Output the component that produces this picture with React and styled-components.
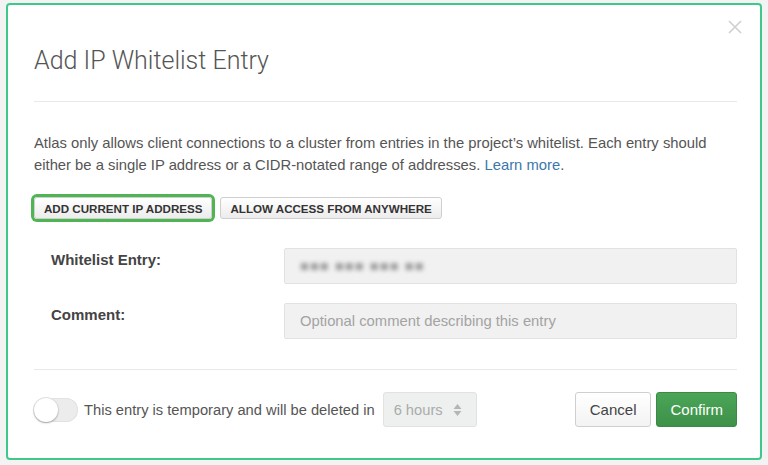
import React from "react";
import styled, { createGlobalStyle } from "styled-components";

const GlobalStyle = createGlobalStyle`
  html, body {
    margin: 0;
    padding: 0;
    background: #f3f3f3;
  }
  body {
    font-family: "Liberation Sans", Arial, sans-serif;
    color: #555;
  }
`;

const Page = styled.div`
  width: 768px;
  height: 465px;
  padding: 3px 0 0 6px;
  box-sizing: border-box;
`;

const Modal = styled.div`
  position: relative;
  width: 756px;
  height: 457px;
  box-sizing: border-box;
  background: #fff;
  border: 2px solid #3ec98b;
  border-radius: 4px;
  padding: 0 23px 0 26px;
  display: flex;
  flex-direction: column;
`;

const Header = styled.div`
  padding: 40px 0 24px;
  border-bottom: 1px solid #e8e8e8;
`;

const Title = styled.h2`
  margin: 0;
  font-family: Roboto, "Liberation Sans", sans-serif;
  font-weight: 300;
  font-size: 25px;
  line-height: 32px;
  color: #555;
`;

const Close = styled.button`
  position: absolute;
  top: 13px;
  right: 16px;
  width: 18px;
  height: 18px;
  padding: 0;
  border: 0;
  background: none;
  display: flex;
  align-items: center;
  justify-content: center;
`;

const Intro = styled.p`
  margin: 30px 0 0;
  font-size: 14.8px;
  line-height: 22px;
  color: #555;

  & a {
    color: #3b77ad;
    text-decoration: none;
  }
`;

const ButtonRow = styled.div`
  display: flex;
  gap: 8px;
  margin-top: 21px;
`;

const SmallButton = styled.button`
  height: 22px;
  padding: 0 9px;
  font-family: "Liberation Sans", Arial, sans-serif;
  font-weight: 700;
  font-size: 11.6px;
  color: #333;
  background: linear-gradient(#ffffff, #ececec);
  border: 1px solid #cfcfcf;
  border-radius: 3px;
  box-shadow: ${(p) => (p.$focused ? "0 0 0 3px #4fb452" : "none")};
`;

const Form = styled.div`
  display: flex;
  flex-direction: column;
  gap: 19px;
  margin-top: 29px;
  padding-bottom: 30px;
  border-bottom: 1px solid #e8e8e8;
`;

const Row = styled.div`
  display: flex;
  align-items: flex-start;
`;

const Label = styled.label`
  width: 233px;
  padding: 1px 0 0 17px;
  font-weight: 700;
  font-size: 15px;
  line-height: 22px;
  color: #444;
`;

const Field = styled.div`
  flex: 1;
  height: 36px;
  box-sizing: border-box;
  background: #f1f1f1;
  border: 1px solid #e2e2e2;
  border-radius: 2px;
  padding: 0 15px;
  display: flex;
  align-items: center;
  font-size: 14.8px;
  color: ${(p) => (p.$placeholder ? "#a3a3a3" : "#777")};
`;

const Blurred = styled.span`
  filter: blur(2px);
  color: #a0a0a0;
  letter-spacing: 1px;
`;

const Footer = styled.div`
  display: flex;
  align-items: center;
  margin-top: 22px;
`;

const Toggle = styled.div`
  width: 44px;
  height: 24px;
  border-radius: 12px;
  background: #ececec;
  box-shadow: inset 0 0 0 1px #e2e2e2;
  display: flex;
  align-items: center;
  padding: 0 2px 0 0;
  box-sizing: border-box;
`;

const Knob = styled.div`
  width: 24px;
  height: 24px;
  border-radius: 50%;
  background: #fff;
  box-shadow: 0 1px 2px rgba(0, 0, 0, 0.3), 0 0 0 1px #e4e4e4;
`;

const TempText = styled.span`
  margin-left: 6px;
  font-size: 14.7px;
  color: #555;
`;

const Select = styled.div`
  margin-left: 8px;
  width: 94px;
  height: 35px;
  box-sizing: border-box;
  background: #eef0ef;
  border: 1px solid #e0e3e1;
  border-radius: 3px;
  padding: 0 14px 0 10px;
  display: flex;
  align-items: center;
  justify-content: space-between;
  font-size: 14.7px;
  color: #a9acaa;
`;

const Actions = styled.div`
  margin-left: auto;
  display: flex;
  gap: 5px;
`;

const Button = styled.button`
  height: 35px;
  padding: 0 ${(p) => (p.$primary ? "13px" : "14px")};
  font-family: "Liberation Sans", Arial, sans-serif;
  font-size: 15px;
  border-radius: 3px;
  color: ${(p) => (p.$primary ? "#fff" : "#444")};
  background: ${(p) =>
    p.$primary
      ? "linear-gradient(#4aa557, #3e9149)"
      : "linear-gradient(#ffffff, #f3f3f3)"};
  border: 1px solid ${(p) => (p.$primary ? "#3a8944" : "#cfcfcf")};
`;

const App = () => {
  return (
    <Page>
      <GlobalStyle />
      <Modal>
        <Close aria-label="close">
          <svg width="14" height="14" viewBox="0 0 14 14">
            <path d="M1 1L13 13M13 1L1 13" stroke="#cfcfcf" strokeWidth="1.6" />
          </svg>
        </Close>
        <Header>
          <Title>Add IP Whitelist Entry</Title>
        </Header>
        <Intro>
          Atlas only allows client connections to a cluster from entries in the
          project’s whitelist. Each entry should either be a single IP address or
          a CIDR-notated range of addresses. <a href="#">Learn more</a>.
        </Intro>
        <ButtonRow>
          <SmallButton $focused>ADD CURRENT IP ADDRESS</SmallButton>
          <SmallButton>ALLOW ACCESS FROM ANYWHERE</SmallButton>
        </ButtonRow>
        <Form>
          <Row>
            <Label>Whitelist Entry:</Label>
            <Field>
              <Blurred>■■■ ■■■ ■■■ ■■</Blurred>
            </Field>
          </Row>
          <Row>
            <Label>Comment:</Label>
            <Field $placeholder>Optional comment describing this entry</Field>
          </Row>
        </Form>
        <Footer>
          <Toggle>
            <Knob />
          </Toggle>
          <TempText>This entry is temporary and will be deleted in</TempText>
          <Select>
            6 hours
            <svg width="9" height="14" viewBox="0 0 9 14">
              <path d="M4.5 1L8.5 6H0.5Z M4.5 13L8.5 8H0.5Z" fill="#b3b6b4" />
            </svg>
          </Select>
          <Actions>
            <Button>Cancel</Button>
            <Button $primary>Confirm</Button>
          </Actions>
        </Footer>
      </Modal>
    </Page>
  );
};

export default App;
